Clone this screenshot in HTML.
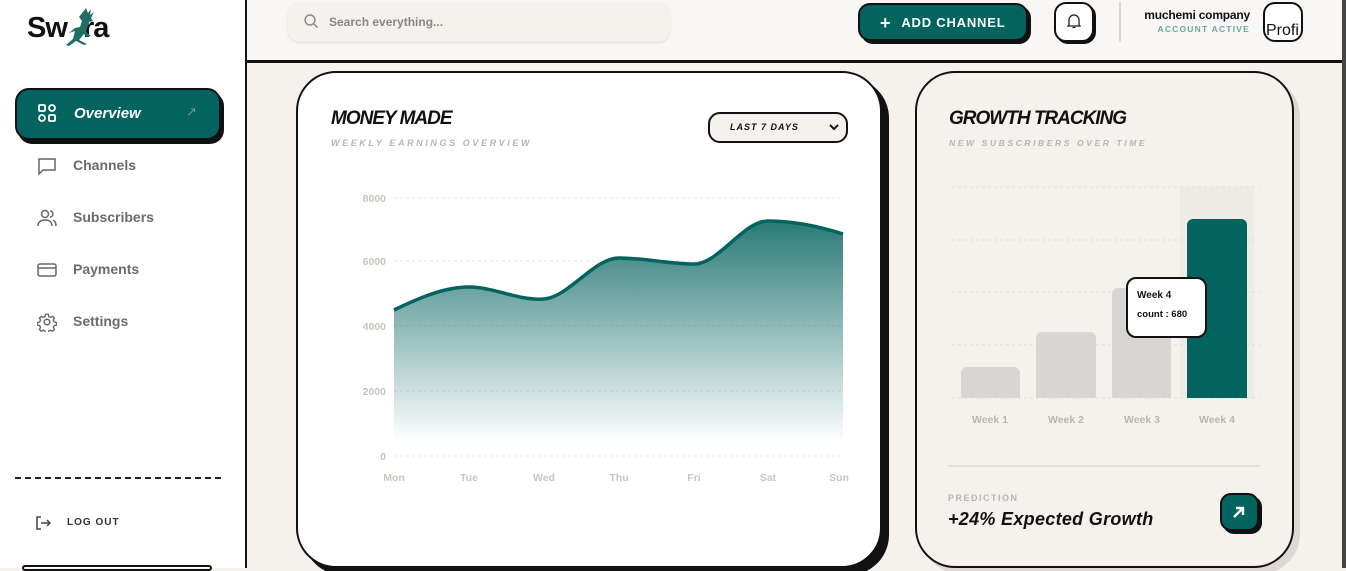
<!DOCTYPE html>
<html><head><meta charset="utf-8"><style>
*{box-sizing:border-box;margin:0;padding:0}
body{width:1346px;height:568px;overflow:hidden;background:#f5f1ed;font-family:"Liberation Sans",sans-serif;position:relative}
.abs{position:absolute}
.side{left:0;top:0;width:247px;height:568px;background:#fff;border-right:2px solid #111}
.hdr{left:247px;top:0;width:1095px;height:63px;background:#f8f7f6;border-bottom:3px solid #111}
.rb{left:1342px;top:0;width:4px;height:568px;background:#444}
.nav{left:36px;font-size:14px;font-weight:bold;color:#6b6b6b}
.card{border:2px solid #111;border-radius:40px}
.t1{font-weight:900;font-style:italic;font-size:19px;letter-spacing:-1px;color:#111}
.t2{font-weight:bold;font-style:italic;font-size:9px;letter-spacing:2.6px;color:#b5b5b5}
</style></head><body>
<div class="abs side"></div>
<div class="abs" style="left:27px;top:12px;font-size:29px;font-weight:bold;color:#111;letter-spacing:-1px">Sw</div>
<div class="abs" style="left:83px;top:12px;font-size:29px;font-weight:bold;color:#111;letter-spacing:-1px">ra</div>
<svg class="abs" style="left:58px;top:6px" width="46" height="42" viewBox="0 0 46 42"><path d="M28 2l2 5 3-4-1 6 4-3-3 6 2 3-4 1-3 10 5 4-4 1-3-3-5 6 8 4-3 1-8-4-7 5-3-1 7-6 2-8-6 2 6-5 5-1 2-6-3-4z" fill="#1f6d67"/></svg>
<div class="abs" style="left:15px;top:88px;width:206px;height:52px;background:#03635f;border:2px solid #111;border-radius:14px;box-shadow:3px 4px 0 #111"></div>
<svg class="abs" style="left:38px;top:104px" width="18" height="18" viewBox="0 0 18 18" fill="none" stroke="#fff" stroke-width="1.8"><rect x="1" y="1" width="6" height="6" rx="1"/><rect x="11" y="1" width="6" height="6" rx="3"/><rect x="1" y="11" width="6" height="6" rx="3"/><rect x="11" y="11" width="6" height="6" rx="1"/></svg>
<div class="abs" style="left:74px;top:105px;font-size:15px;font-weight:900;font-style:italic;color:#fff">Overview</div>
<div class="abs" style="left:186px;top:104px;color:#6a9c98;font-size:13px">↗</div>
<svg class="abs" style="left:37px;top:156px" width="20" height="20" viewBox="0 0 20 20" fill="none" stroke="#666" stroke-width="1.5"><path d="M2 3h16v11H6l-4 4z"/></svg>
<div class="abs nav" style="left:73px;top:157px">Channels</div>
<svg class="abs" style="left:37px;top:208px" width="20" height="20" viewBox="0 0 20 20" fill="none" stroke="#666" stroke-width="1.5"><circle cx="8" cy="6" r="3.5"/><path d="M1 18c0-4 3-6 7-6s7 2 7 6M13 3a3 3 0 010 6M16 12c2 1 3 3 3 6"/></svg>
<div class="abs nav" style="left:73px;top:209px">Subscribers</div>
<svg class="abs" style="left:37px;top:260px" width="20" height="20" viewBox="0 0 20 20" fill="none" stroke="#666" stroke-width="1.5"><rect x="1" y="4" width="18" height="12" rx="2"/><path d="M1 8h18"/></svg>
<div class="abs nav" style="left:73px;top:261px">Payments</div>
<svg class="abs" style="left:37px;top:312px" width="20" height="20" viewBox="0 0 20 20" fill="none" stroke="#666" stroke-width="1.5"><circle cx="10" cy="10" r="2.8"/><path d="M8.5 1.5h3l.5 2.5 2 1 2.3-1.2 2 2-1.2 2.3 1 2 2.5.5v3l-2.5.5-1 2 1.2 2.3-2 2-2.3-1.2-2 1-.5 2.5h-3l-.5-2.5-2-1-2.3 1.2-2-2 1.2-2.3-1-2-2.5-.5v-3l2.5-.5 1-2-1.2-2.3 2-2 2.3 1.2 2-1z" transform="scale(.9) translate(1 1)"/></svg>
<div class="abs nav" style="left:73px;top:313px">Settings</div>
<div class="abs" style="left:15px;top:477px;width:206px;border-top:2px dashed #222"></div>
<svg class="abs" style="left:35px;top:515px" width="16" height="16" viewBox="0 0 16 16" fill="none" stroke="#444" stroke-width="1.5"><path d="M6 2H2v12h4M6 8h9M12 5l3 3-3 3"/></svg>
<div class="abs" style="left:67px;top:517px;font-size:10px;font-weight:900;letter-spacing:1px;color:#333">LOG OUT</div>
<div class="abs" style="left:22px;top:565px;width:190px;height:6px;border:2px solid #111;border-radius:6px"></div>

<div class="abs hdr"></div>
<div class="abs rb"></div>
<div class="abs" style="left:288px;top:2px;width:382px;height:40px;background:#f5f1ed;border-radius:12px;box-shadow:0 1px 2px #ddd"></div>
<svg class="abs" style="left:304px;top:14px" width="14" height="14" viewBox="0 0 14 14" fill="none" stroke="#888" stroke-width="1.4"><circle cx="6" cy="6" r="5"/><path d="M10 10l3.5 3.5"/></svg>
<div class="abs" style="left:329px;top:15px;font-size:12px;font-weight:bold;color:#888">Search everything...</div>
<div class="abs" style="left:858px;top:3px;width:170px;height:38px;background:#03635f;border:2px solid #111;border-radius:12px;box-shadow:3px 3px 0 #111"></div>
<div class="abs" style="left:880px;top:13px;font-size:13px;font-weight:900;color:#fff;letter-spacing:.8px"><span style="font-size:18px;vertical-align:-2px;margin-right:10px">+</span>ADD CHANNEL</div>
<div class="abs" style="left:1054px;top:2px;width:40px;height:40px;background:#fff;border:2px solid #111;border-radius:12px;box-shadow:2px 2px 0 #111"></div>
<svg class="abs" style="left:1067px;top:13px" width="14" height="16" viewBox="0 0 14 16" fill="none" stroke="#222" stroke-width="1.3"><path d="M2 12V7a5 5 0 0110 0v5l1 1H1zM5.5 14.5h3"/></svg>
<div class="abs" style="left:1119px;top:2px;width:2px;height:40px;background:#ddd8d2"></div>
<div class="abs" style="left:1110px;top:8px;width:140px;text-align:right;font-size:12px;font-weight:bold;color:#111;letter-spacing:-.2px">muchemi company</div>
<div class="abs" style="left:1110px;top:24px;width:140px;text-align:right;font-size:8.5px;font-weight:900;color:#6aa6a2;letter-spacing:1.2px">ACCOUNT ACTIVE</div>
<div class="abs" style="left:1263px;top:2px;width:40px;height:40px;background:#fff;border:2px solid #111;border-radius:12px;overflow:hidden;font-size:16px;padding:18px 0 0 1px;color:#111">Profi</div>

<div class="abs card" style="left:296px;top:71px;width:586px;height:497px;background:#fff;box-shadow:7px 7px 0 #111"></div>
<div class="abs t1" style="left:331px;top:108px">MONEY MADE</div>
<div class="abs t2" style="left:331px;top:138px">WEEKLY EARNINGS OVERVIEW</div>
<div class="abs" style="left:708px;top:112px;width:140px;height:31px;background:#f5f1ed;border:2px solid #111;border-radius:12px"></div>
<div class="abs" style="left:730px;top:122px;font-size:9px;font-weight:900;font-style:italic;letter-spacing:1px;color:#111">LAST 7 DAYS</div>
<svg class="abs" style="left:829px;top:123px" width="10" height="8" viewBox="0 0 10 8"><path d="M1 2l4 4 4-4" stroke="#111" stroke-width="2" fill="none"/></svg>
<svg class="abs" style="left:340px;top:180px" width="520" height="310">
<defs><linearGradient id="g" x1="0" y1="0" x2="0" y2="1"><stop offset="0" stop-color="#03635f" stop-opacity=".85"/><stop offset="1" stop-color="#03635f" stop-opacity="0"/></linearGradient></defs>
<g stroke="#e8e6e4" stroke-dasharray="3 3"><path d="M54 18H503M54 81H503M54 146H503M54 211H503M54 276H503"/></g>
<g fill="#c8c4c0" font-size="10.5" font-weight="bold" text-anchor="end"><text x="46" y="22">8000</text><text x="46" y="85">6000</text><text x="46" y="150">4000</text><text x="46" y="215">2000</text><text x="46" y="280">0</text></g>
<path d="M54 130C79 118 104 107 129 107S179 121 204 119S254 78 279 78S329 84 354 84S403 41 428 41S478 46 503 54V262H54Z" fill="url(#g)"/>
<path d="M54 130C79 118 104 107 129 107S179 121 204 119S254 78 279 78S329 84 354 84S403 41 428 41S478 46 503 54" fill="none" stroke="#03635f" stroke-width="3.5"/>
<g fill="#c8c4c0" font-size="10.5" font-weight="bold" text-anchor="middle"><text x="54" y="301">Mon</text><text x="129" y="301">Tue</text><text x="204" y="301">Wed</text><text x="279" y="301">Thu</text><text x="354" y="301">Fri</text><text x="428" y="301">Sat</text><text x="499" y="301">Sun</text></g>
</svg>

<div class="abs card" style="left:915px;top:71px;width:379px;height:497px;background:#f5f1ed;box-shadow:6px 6px 0 #ddd8d4"></div>
<div class="abs t1" style="left:949px;top:108px">GROWTH TRACKING</div>
<div class="abs t2" style="left:949px;top:138px;font-size:8.5px">NEW SUBSCRIBERS OVER TIME</div>
<svg class="abs" style="left:940px;top:180px" width="330" height="250">
<rect x="240" y="7" width="74" height="211" fill="#efebe7"/>
<g stroke="#e2ddd8" stroke-dasharray="3 3"><path d="M12 7H320M12 60H320M12 112H320M12 165H320M12 218H320"/></g>
<path d="M21 218V193a6 6 0 016-6h47a6 6 0 016 6V218z" fill="#d9d5d2"/>
<path d="M96 218V158a6 6 0 016-6h48a6 6 0 016 6V218z" fill="#d9d5d2"/>
<path d="M172 218V114a6 6 0 016-6h47a6 6 0 016 6V218z" fill="#d9d5d2"/>
<path d="M247 218V45a6 6 0 016-6h48a6 6 0 016 6V218z" fill="#03635f"/>
<g fill="#b9b5b1" font-size="10.5" font-weight="bold" text-anchor="middle"><text x="50" y="243">Week 1</text><text x="126" y="243">Week 2</text><text x="202" y="243">Week 3</text><text x="277" y="243">Week 4</text></g>
</svg>
<div class="abs" style="left:1126px;top:277px;width:81px;height:61px;background:#fff;border:2px solid #111;border-radius:10px"></div>
<div class="abs" style="left:1137px;top:290px;font-size:10px;font-weight:bold;color:#111">Week 4</div>
<div class="abs" style="left:1137px;top:309px;font-size:9.5px;font-weight:bold;color:#111">count : 680</div>
<div class="abs" style="left:948px;top:465px;width:312px;height:2px;background:#e4e0dc"></div>
<div class="abs" style="left:948px;top:493px;font-size:9px;font-weight:bold;letter-spacing:1.5px;color:#b5b5b5">PREDICTION</div>
<div class="abs" style="left:948px;top:509px;font-size:18px;font-weight:bold;font-style:italic;color:#111;letter-spacing:.3px">+24% Expected Growth</div>
<div class="abs" style="left:1220px;top:493px;width:39px;height:38px;background:#03635f;border:2px solid #111;border-radius:11px;box-shadow:3px 3px 0 #111"></div>
<svg class="abs" style="left:1232px;top:505px" width="14" height="14" viewBox="0 0 14 14" stroke="#fff" stroke-width="2.4" fill="none"><path d="M2 12L11 3M4 3h7v7"/></svg>
</body></html>
